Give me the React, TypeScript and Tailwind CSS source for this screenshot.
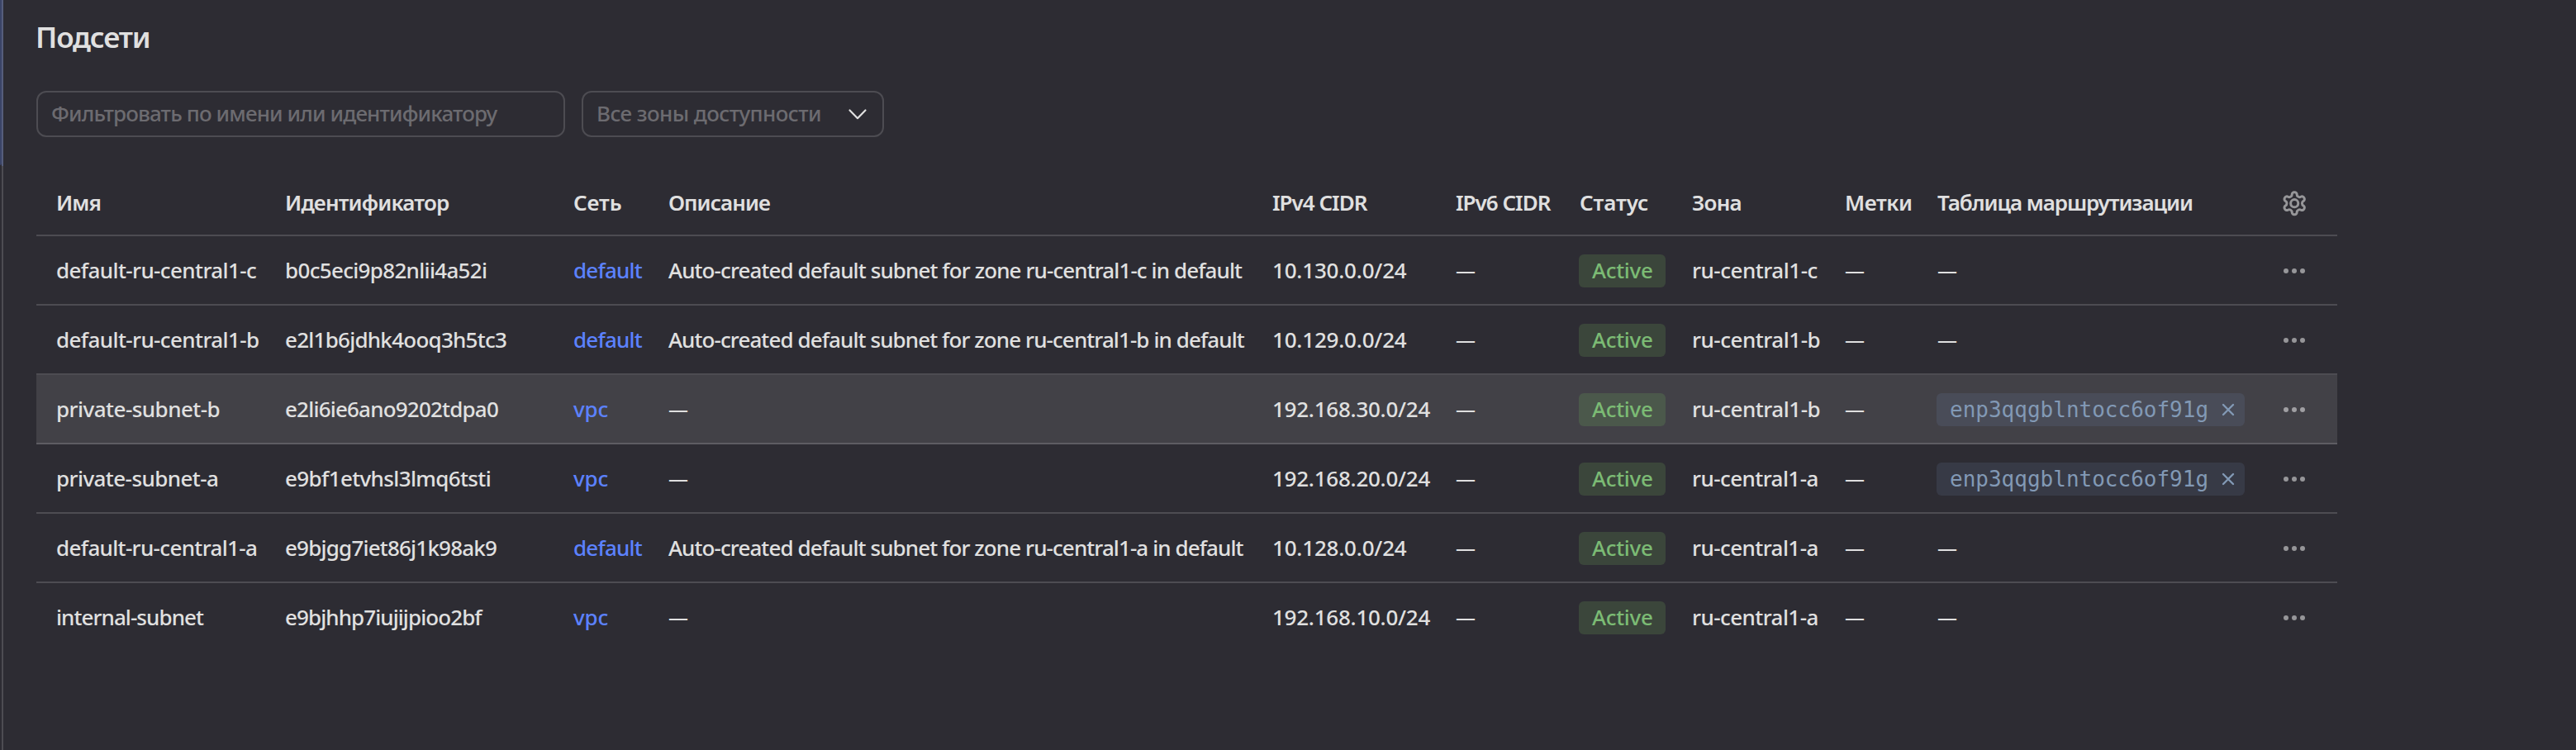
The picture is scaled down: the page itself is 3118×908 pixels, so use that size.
import type { ReactNode } from "react";

type Cell = { text: string; track: string };

type Subnet = {
  name: Cell;
  id: Cell;
  network: "default" | "vpc";
  description?: Cell;
  cidr: Cell;
  zone: Cell;
  routeTable?: string;
  hovered?: boolean;
};

const HEADERS: Cell[] = [
  { text: "Имя", track: "tracking-[-0.9px]" },
  { text: "Идентификатор", track: "tracking-[-0.83px]" },
  { text: "Сеть", track: "tracking-[-0.12px]" },
  { text: "Описание", track: "tracking-[-0.94px]" },
  { text: "IPv4 CIDR", track: "tracking-[-1px]" },
  { text: "IPv6 CIDR", track: "tracking-[-1px]" },
  { text: "Статус", track: "tracking-[-0.1px]" },
  { text: "Зона", track: "tracking-[-0.76px]" },
  { text: "Метки", track: "tracking-[-0.42px]" },
  { text: "Таблица маршрутизации", track: "tracking-[-1.05px]" },
];

const ZONE_A: Cell = { text: "ru-central1-a", track: "tracking-[-0.56px]" };
const ZONE_B: Cell = { text: "ru-central1-b", track: "tracking-[-0.47px]" };
const ZONE_C: Cell = { text: "ru-central1-c", track: "tracking-[-0.47px]" };

const SUBNETS: Subnet[] = [
  {
    name: { text: "default-ru-central1-c", track: "tracking-[-0.6px]" },
    id: { text: "b0c5eci9p82nlii4a52i", track: "tracking-[-0.68px]" },
    network: "default",
    description: {
      text: "Auto-created default subnet for zone ru-central1-c in default",
      track: "tracking-[-0.9px]",
    },
    cidr: { text: "10.130.0.0/24", track: "tracking-[-0.2px]" },
    zone: ZONE_C,
  },
  {
    name: { text: "default-ru-central1-b", track: "tracking-[-0.6px]" },
    id: { text: "e2l1b6jdhk4ooq3h5tc3", track: "tracking-[-0.75px]" },
    network: "default",
    description: {
      text: "Auto-created default subnet for zone ru-central1-b in default",
      track: "tracking-[-0.91px]",
    },
    cidr: { text: "10.129.0.0/24", track: "tracking-[-0.2px]" },
    zone: ZONE_B,
  },
  {
    name: { text: "private-subnet-b", track: "tracking-[-0.53px]" },
    id: { text: "e2li6ie6ano9202tdpa0", track: "tracking-[-0.8px]" },
    network: "vpc",
    cidr: { text: "192.168.30.0/24", track: "tracking-[-0.25px]" },
    zone: ZONE_B,
    routeTable: "enp3qqgblntocc6of91g",
    hovered: true,
  },
  {
    name: { text: "private-subnet-a", track: "tracking-[-0.57px]" },
    id: { text: "e9bf1etvhsl3lmq6tsti", track: "tracking-[-0.63px]" },
    network: "vpc",
    cidr: { text: "192.168.20.0/24", track: "tracking-[-0.25px]" },
    zone: ZONE_A,
    routeTable: "enp3qqgblntocc6of91g",
  },
  {
    name: { text: "default-ru-central1-a", track: "tracking-[-0.65px]" },
    id: { text: "e9bjgg7iet86j1k98ak9", track: "tracking-[-0.8px]" },
    network: "default",
    description: {
      text: "Auto-created default subnet for zone ru-central1-a in default",
      track: "tracking-[-0.91px]",
    },
    cidr: { text: "10.128.0.0/24", track: "tracking-[-0.2px]" },
    zone: ZONE_A,
  },
  {
    name: { text: "internal-subnet", track: "tracking-[-0.93px]" },
    id: { text: "e9bjhhp7iujijpioo2bf", track: "tracking-[-0.92px]" },
    network: "vpc",
    cidr: { text: "192.168.10.0/24", track: "tracking-[-0.25px]" },
    zone: ZONE_A,
  },
];

const GRID =
  "grid grid-cols-[277px_349px_115px_731px_222px_150px_136px_185px_112px_381px_104px] items-center pl-[23px]";

function Text({ cell }: { cell: Cell }) {
  return <span className={`whitespace-nowrap pl-px ${cell.track}`}>{cell.text}</span>;
}

function Dash() {
  return <span className="ml-px text-[24px]">—</span>;
}

function GearIcon() {
  return (
    <svg width="32.4" height="32.4" viewBox="0 0 24 24" fill="none" stroke="#969699" strokeWidth="2.2" strokeLinejoin="round">
      <path d="M12.22 2h-.44a2 2 0 0 0-2 2v.18a2 2 0 0 1-1 1.73l-.43.25a2 2 0 0 1-2 0l-.15-.08a2 2 0 0 0-2.73.73l-.22.38a2 2 0 0 0 .73 2.73l.15.1a2 2 0 0 1 1 1.72v.51a2 2 0 0 1-1 1.74l-.15.09a2 2 0 0 0-.73 2.73l.22.38a2 2 0 0 0 2.73.73l.15-.08a2 2 0 0 1 2 0l.43.25a2 2 0 0 1 1 1.73V20a2 2 0 0 0 2 2h.44a2 2 0 0 0 2-2v-.18a2 2 0 0 1 1-1.73l.43-.25a2 2 0 0 1 2 0l.15.08a2 2 0 0 0 2.73-.73l.22-.39a2 2 0 0 0-.73-2.73l-.15-.08a2 2 0 0 1-1-1.74v-.5a2 2 0 0 1 1-1.74l.15-.09a2 2 0 0 0 .73-2.73l-.22-.38a2 2 0 0 0-2.73-.73l-.15.08a2 2 0 0 1-2 0l-.43-.25a2 2 0 0 1-1-1.73V4a2 2 0 0 0-2-2z" />
      <circle cx="12" cy="12" r="3.4" />
    </svg>
  );
}

function DotsIcon() {
  return (
    <svg width="32" height="32" viewBox="0 0 32 32" fill="currentColor">
      <circle cx="6" cy="16" r="3" />
      <circle cx="16" cy="16" r="3" />
      <circle cx="26" cy="16" r="3" />
    </svg>
  );
}

function Row({ subnet, last }: { subnet: Subnet; last: boolean }) {
  const { hovered } = subnet;
  const surface = hovered
    ? "border-b-2 border-[#5e5d63] bg-[#424147]"
    : last
      ? "border-b-2 border-transparent"
      : "border-b-2 border-[#4d4c52]";
  const routes: ReactNode = subnet.routeTable ? (
    <span
      className={`mt-0.5 flex h-10 w-[373px] items-center rounded-[6px] pl-4 text-[#8299b5] ${hovered ? "bg-[#494c58]" : "bg-[#373a46]"}`}
    >
      <span className="font-['DejaVu_Sans_Mono',monospace] text-[26px] font-normal leading-10">{subnet.routeTable}</span>
      <svg className="ml-4" width="16" height="16" viewBox="0 0 16 16" fill="none" stroke="currentColor" strokeWidth="2.4" strokeLinecap="round">
        <path d="M2 2l12 12M14 2L2 14" />
      </svg>
    </span>
  ) : (
    <Dash />
  );
  return (
    <div className={`h-[84px] font-medium ${GRID} ${surface}`}>
      <Text cell={subnet.name} />
      <Text cell={subnet.id} />
      <a className={`pl-px text-[#5c82ff] ${subnet.network === "vpc" ? "tracking-[-0.1px]" : "tracking-[-0.8px]"}`}>{subnet.network}</a>
      {subnet.description ? <Text cell={subnet.description} /> : <Dash />}
      <Text cell={subnet.cidr} />
      <Dash />
      <span
        className={`mt-0.5 h-10 w-[105px] rounded-[6px] pl-4 leading-[38px] tracking-[-0.3px] text-[#7bbb74] ${hovered ? "bg-[#4b584b]" : "bg-[#3b463b]"}`}
      >
        Active
      </span>
      <Text cell={subnet.zone} />
      <Dash />
      {routes}
      <span className={`mt-0.5 flex justify-center ${hovered ? "text-[#a09fa3]" : "text-[#969699]"}`}>
        <DotsIcon />
      </span>
    </div>
  );
}

export default function App() {
  return (
    <div className="flex h-[908px] w-[3118px] overflow-hidden bg-[#2d2c33] font-['Noto_Sans',sans-serif] text-[26px] leading-10 text-[#e0e0e0]">
      <div className="w-0.5 shrink-0">
        <div className="h-[200px] rounded-br-[2px] bg-[#3a4467]" />
      </div>
      <div className="w-0.5 shrink-0 bg-[#4d4c52]">
        <div className="h-[201px] bg-[#555d7b]" />
      </div>
      <main className="flex w-[2825px] flex-col pl-10 pt-[23px]">
        <h1 className="ml-[-1px] text-[35px] font-semibold leading-[44px] tracking-[-1.15px]">Подсети</h1>
        <div className="mt-[43px] flex gap-5 text-[#6c6b70]">
          <div className="flex h-14 w-[640px] items-center rounded-[12px] border-2 border-[#4d4c52] pb-0.5 pl-4">
            <span className="whitespace-nowrap font-medium tracking-[-0.87px]">Фильтровать по имени или идентификатору</span>
          </div>
          <div className="flex h-14 w-[366px] items-center justify-between rounded-[12px] border-2 border-[#4d4c52] pb-0.5 pl-4 pr-[18px]">
            <span className="whitespace-nowrap font-medium tracking-[-0.6px]">Все зоны доступности</span>
            <svg className="mt-0.5" width="24" height="16" viewBox="0 0 24 16" fill="none" stroke="#e0e0e0" strokeWidth="2.2" strokeLinecap="round" strokeLinejoin="round">
              <path d="M2.5 3.5L12 13.2L21.5 3.5" />
            </svg>
          </div>
        </div>
        <div className="mt-10">
          <div className={`h-20 border-b-2 border-[#4d4c52] font-semibold ${GRID}`}>
            {HEADERS.map((header) => (
              <Text key={header.text} cell={header} />
            ))}
            <span className="mt-0.5 flex justify-center">
              <GearIcon />
            </span>
          </div>
          {SUBNETS.map((subnet, index) => (
            <Row key={subnet.id.text} subnet={subnet} last={index === SUBNETS.length - 1} />
          ))}
        </div>
      </main>
    </div>
  );
}
